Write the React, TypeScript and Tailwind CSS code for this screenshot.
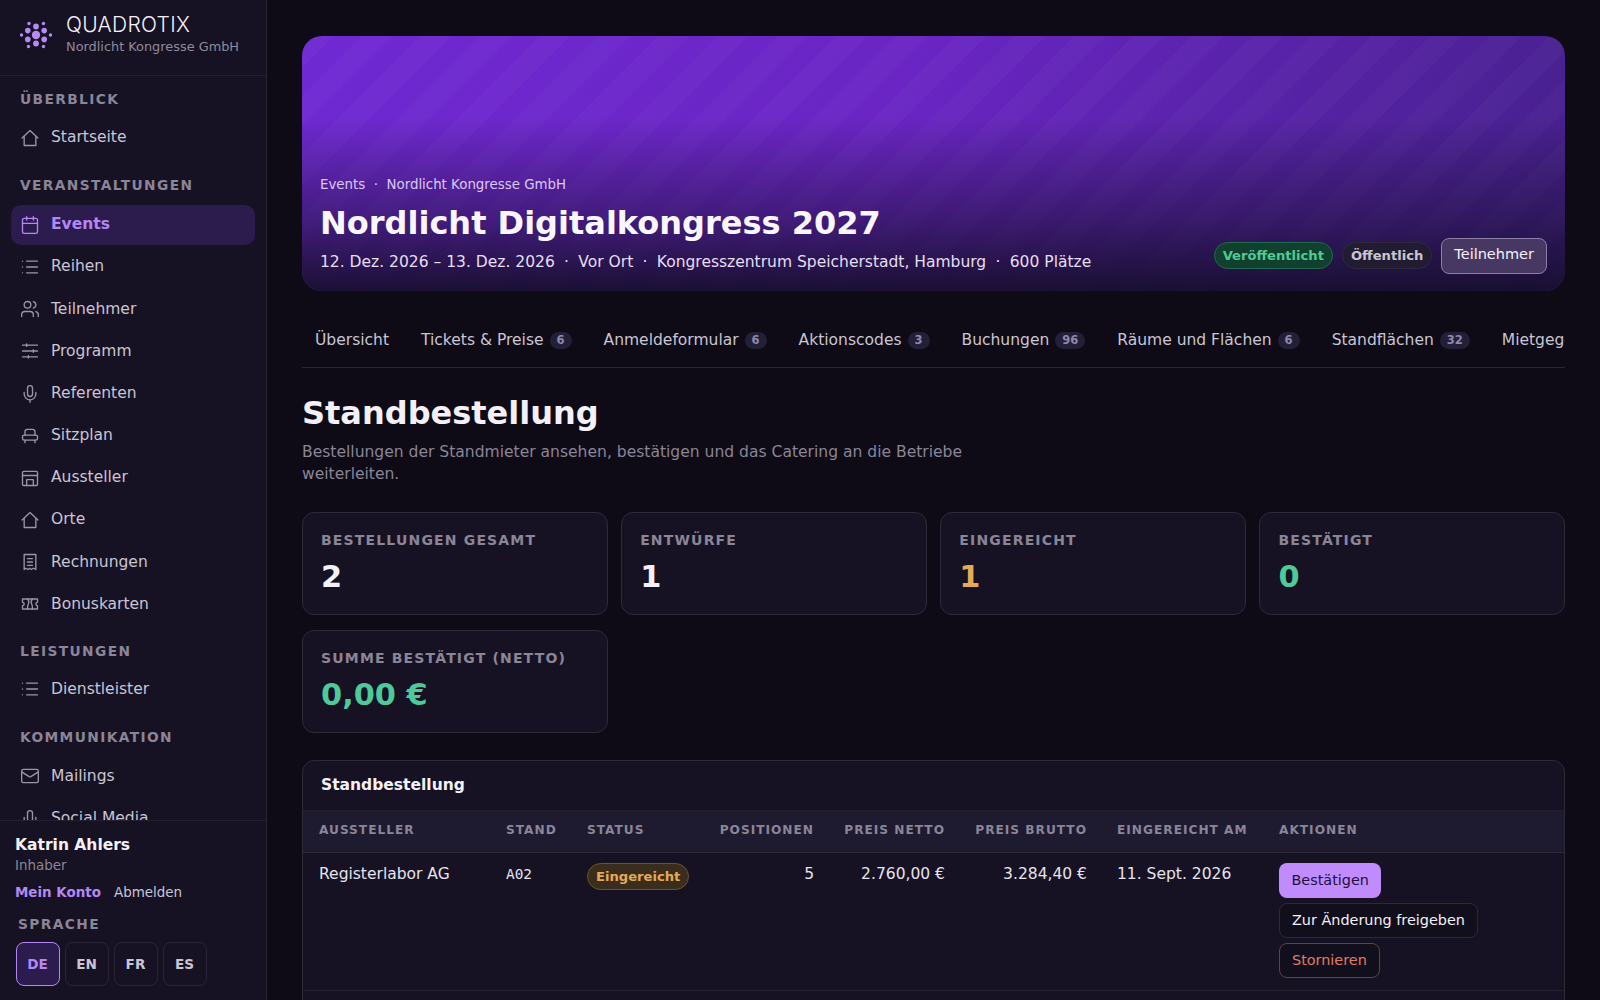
import { Calendar, List, Mail, Mic, Users } from "lucide-react";
import type { ReactNode } from "react";

function Glyph({ children }: { children: ReactNode }) {
  return (
    <svg width="20" height="20" viewBox="0 0 24 24" fill="none" stroke="currentColor" strokeWidth="1.6" strokeLinecap="round" strokeLinejoin="round">
      {children}
    </svg>
  );
}

const HomeIcon = () => (
  <Glyph>
    <path d="M2.5 12 12 3l9.5 9" />
    <path d="M5 10v11h14V10" />
  </Glyph>
);
const SlidersIcon = () => (
  <Glyph>
    <path d="M3 5h18M3 12h18M3 19h18" />
    <path d="M8 3.5v3M16 10.5v3M10 17.5v3" />
  </Glyph>
);
const SeatIcon = () => (
  <Glyph>
    <path d="M6 11V7a3 3 0 0 1 3-3h6a3 3 0 0 1 3 3v4" />
    <rect x="3" y="11" width="18" height="6" rx="2" />
    <path d="M6 17v3M18 17v3" />
  </Glyph>
);
const StoreIcon = () => (
  <Glyph>
    <rect x="3" y="4" width="18" height="17" rx="1.5" />
    <path d="M3 9h18" />
    <path d="M8 21v-7h8v7" />
  </Glyph>
);
const ReceiptIcon = () => (
  <Glyph>
    <path d="M5 3h14v18l-3-1.5-2.5 1.5-2-1.5-2 1.5L7 19.5 5 21z" />
    <path d="M9 8h6M9 12h6M9 16h6" />
  </Glyph>
);
const TicketIcon = () => (
  <Glyph>
    <path d="M3 6h18v4a2 2 0 0 0 0 4v4H3v-4a2 2 0 0 0 0-4z" />
    <path d="M9 6c2 2 2 4 1 6s-1 4-1 6M15 6c-2 2-2 4-1 6s1 4 1 6" />
  </Glyph>
);

function Logo() {
  return (
    <svg width="36" height="36" viewBox="0 0 36 36" fill="#b58af5">
      <circle cx="18" cy="18" r="4.2" />
      <circle cx="18" cy="9.5" r="2.9" />
      <circle cx="18" cy="26.5" r="2.9" />
      <circle cx="9.8" cy="13.6" r="2.8" />
      <circle cx="26.2" cy="13.6" r="2.8" />
      <circle cx="9.8" cy="22.4" r="2.8" />
      <circle cx="26.2" cy="22.4" r="2.8" />
      <circle cx="11" cy="6.5" r="1.7" />
      <circle cx="25.5" cy="6.5" r="1.7" />
      <circle cx="3.5" cy="18" r="1.7" />
      <circle cx="32.5" cy="18" r="1.7" />
      <circle cx="10.5" cy="29.5" r="1.7" />
      <circle cx="25.5" cy="29.5" r="1.7" />
    </svg>
  );
}

function NavLabel({ children }: { children: ReactNode }) {
  return <div className="px-[20px] text-[13.76px] leading-[21px] font-bold tracking-[1.4px] uppercase text-[#8a8597]">{children}</div>;
}

function NavItem({ icon, label, active }: { icon: ReactNode; label: string; active?: boolean }) {
  return (
    <a
      className={
        active
          ? "mx-[11px] mb-[2px] flex h-[40.2px] items-center gap-[11px] rounded-[10px] bg-[#2c1b4d] pr-[10px] pl-[9px] text-[15.52px] font-bold text-[#b388f5]"
          : "mx-[11px] mb-[2px] flex h-[40.2px] items-center gap-[11px] rounded-[10px] pr-[10px] pl-[9px] text-[15.52px] text-[#c9c5d3]"
      }
    >
      <span className={active ? "text-[#b388f5]" : "text-[#9a95a8]"}>{icon}</span>
      {label}
    </a>
  );
}

function Sidebar() {
  return (
    <aside className="flex h-[1000px] w-[267px] shrink-0 flex-col border-r border-[#2a2635] bg-[#161223]">
      <div className="flex h-[76px] shrink-0 items-center gap-[12px] border-b border-[#231f2e] pb-[6px] pl-[18px]">
        <Logo />
        <div>
          <div className="font-['Inter',sans-serif] text-[21px] leading-[24px] font-light tracking-[0.3px] text-[#f3f1f7]">QUADROTIX</div>
          <div className="-mt-[0.5px] text-[12.88px] leading-[19px] text-[#8f8a9c]">Nordlicht Kongresse GmbH</div>
        </div>
      </div>
      <nav className="min-h-0 flex-1 overflow-hidden pt-[13px]">
        <NavLabel>Überblick</NavLabel>
        <div className="mt-[8px]">
          <NavItem icon={<HomeIcon />} label="Startseite" />
        </div>
        <div className="mt-[17px]">
          <NavLabel>Veranstaltungen</NavLabel>
        </div>
        <div className="mt-[8.5px]">
          <NavItem icon={<Calendar size={20} strokeWidth={1.6} />} label="Events" active />
          <NavItem icon={<List size={20} strokeWidth={1.6} />} label="Reihen" />
          <NavItem icon={<Users size={20} strokeWidth={1.6} />} label="Teilnehmer" />
          <NavItem icon={<SlidersIcon />} label="Programm" />
          <NavItem icon={<Mic size={20} strokeWidth={1.6} />} label="Referenten" />
          <NavItem icon={<SeatIcon />} label="Sitzplan" />
          <NavItem icon={<StoreIcon />} label="Aussteller" />
          <NavItem icon={<HomeIcon />} label="Orte" />
          <NavItem icon={<ReceiptIcon />} label="Rechnungen" />
          <NavItem icon={<TicketIcon />} label="Bonuskarten" />
        </div>
        <div className="mt-[16.5px]">
          <NavLabel>Leistungen</NavLabel>
        </div>
        <div className="mt-[7px]">
          <NavItem icon={<List size={20} strokeWidth={1.6} />} label="Dienstleister" />
        </div>
        <div className="mt-[18px]">
          <NavLabel>Kommunikation</NavLabel>
        </div>
        <div className="mt-[8px]">
          <NavItem icon={<Mail size={20} strokeWidth={1.6} />} label="Mailings" />
          <NavItem icon={<Mic size={20} strokeWidth={1.6} />} label="Social Media" />
        </div>
      </nav>
      <div className="h-[180px] shrink-0 border-t border-[#231f2e] pt-[13px] pl-[15px]">
        <div className="text-[15.52px] leading-[22px] font-bold text-[#f3f1f7]">Katrin Ahlers</div>
        <div className="text-[13.44px] leading-[20px] text-[#8a8597]">Inhaber</div>
        <div className="mt-[7px] flex gap-[13px] text-[13.44px] leading-[20px]">
          <a className="font-bold text-[#b388f5]">Mein Konto</a>
          <a className="text-[#c9c5d3]">Abmelden</a>
        </div>
        <div className="mt-[11px] pl-[3px] text-[13.76px] leading-[21px] font-bold tracking-[1.4px] text-[#8a8597]">SPRACHE</div>
        <div className="mt-[7px] ml-[0.5px] flex gap-[5px]">
          <button className="h-[44px] w-[44px] rounded-[8px] border border-[#b388f5] bg-[#2c1b4d] text-[13.6px] font-bold text-[#b388f5]">DE</button>
          <button className="h-[44px] w-[44px] rounded-[8px] border border-[#2a2635] text-[13.6px] font-bold text-[#c9c5d3]">EN</button>
          <button className="h-[44px] w-[44px] rounded-[8px] border border-[#2a2635] text-[13.6px] font-bold text-[#c9c5d3]">FR</button>
          <button className="h-[44px] w-[44px] rounded-[8px] border border-[#2a2635] text-[13.6px] font-bold text-[#c9c5d3]">ES</button>
        </div>
      </div>
    </aside>
  );
}

function Hero() {
  return (
    <section className="relative h-[255px] overflow-hidden rounded-[20px] bg-[linear-gradient(115deg,#6f29d2_0%,#6a25c4_45%,#44208a_100%)]">
      <div className="absolute inset-0 bg-[repeating-linear-gradient(135deg,rgba(255,255,255,0.025)_0_22px,transparent_22px_42px)]" />
      <div className="absolute inset-0 bg-[linear-gradient(180deg,rgba(22,14,44,0)_32%,rgba(22,14,44,0.5)_72%,rgba(22,14,44,0.95)_100%)]" />
      <div className="relative flex h-full items-end justify-between px-[18px] pb-[17px]">
        <div>
          <div className="text-[13.36px] leading-[20px] text-[#dcc8f7]">
            Events<span className="mx-[8.5px]">·</span>Nordlicht Kongresse GmbH
          </div>
          <h1 className="mt-[7px] text-[32px] leading-[42px] font-bold text-[#f9f7fd]">Nordlicht Digitalkongress 2027</h1>
          <div className="mt-[7.5px] text-[15.52px] leading-[23px] text-[#e6def2]">
            12. Dez. 2026 – 13. Dez. 2026<span className="mx-[9.3px]">·</span>Vor Ort<span className="mx-[9.3px]">·</span>Kongresszentrum Speicherstadt, Hamburg<span className="mx-[9.3px]">·</span>600 Plätze
          </div>
        </div>
        <div className="flex items-center gap-[9px]">
          <span className="mb-[2px] rounded-full border border-[#1f6a4e] bg-[#11402f] px-[8px] py-[3px] text-[13.12px] leading-[19px] font-bold text-[#4fcb94]">Veröffentlicht</span>
          <span className="mb-[2px] rounded-full border border-[#2e2a3c] bg-[#221c33] px-[8px] py-[3px] text-[13.12px] leading-[19px] font-bold text-[#c9c5d3]">Öffentlich</span>
          <button className="h-[36px] rounded-[8px] border border-[#8d7ea8] bg-[#463862] px-[12px] pb-[2px] text-[14.5px] text-[#f3f1f7]">Teilnehmer</button>
        </div>
      </div>
    </section>
  );
}

function Tab({ label, count }: { label: string; count?: string }) {
  return (
    <a className="flex shrink-0 items-center gap-[6px] whitespace-nowrap text-[15.52px] text-[#c9c5d3]">
      {label}
      {count && <span className="rounded-full bg-[#231f36] px-[7px] text-[11.5px] leading-[17px] font-bold text-[#8f88ac]">{count}</span>}
    </a>
  );
}

function StatCard({ label, value, valueClass }: { label: string; value: string; valueClass: string }) {
  return (
    <div className="h-[103.5px] rounded-[12px] border border-[#2e2a3a] bg-[#161223] px-[18px] pt-[17px]">
      <div className="text-[14px] leading-[21px] font-bold tracking-[1.17px] uppercase text-[#8a8597]">{label}</div>
      <div className={"mt-[6px] text-[30.4px] leading-[40px] font-bold " + valueClass}>{value}</div>
    </div>
  );
}

function Th({ children, right }: { children: ReactNode; right?: boolean }) {
  return (
    <th className={(right ? "text-right " : "text-left ") + "px-[15px] pb-[2px] first:pl-[16px] text-[12.16px] font-bold tracking-[1px] whitespace-nowrap uppercase text-[#8a8597]"}>{children}</th>
  );
}

export default function App() {
  return (
    <div className="flex h-[1000px] overflow-hidden bg-[#0e0b16] font-['DejaVu_Sans',sans-serif]">
      <Sidebar />
      <main className="min-w-0 flex-1 overflow-hidden px-[35px] pt-[36px]">
        <Hero />
        <div className="mt-[20px] flex h-[57px] items-center gap-[32px] overflow-hidden border-b border-[#2a2635] pt-[4px] pl-[13px]">
          <Tab label="Übersicht" />
          <Tab label="Tickets & Preise" count="6" />
          <Tab label="Anmeldeformular" count="6" />
          <Tab label="Aktionscodes" count="3" />
          <Tab label="Buchungen" count="96" />
          <Tab label="Räume und Flächen" count="6" />
          <Tab label="Standflächen" count="32" />
          <Tab label="Mietgegenstände" />
        </div>
        <h2 className="mt-[23px] text-[32px] leading-[44px] font-bold text-[#f3f1f7]">Standbestellung</h2>
        <p className="mt-[6px] max-w-[680px] text-[15.56px] leading-[22.4px] text-[#8a8597]">
          Bestellungen der Standmieter ansehen, bestätigen und das Catering an die Betriebe weiterleiten.
        </p>
        <div className="mt-[26px] grid grid-cols-4 gap-x-[13.6px] gap-y-[14.4px]">
          <StatCard label="Bestellungen gesamt" value="2" valueClass="text-[#f3f1f7]" />
          <StatCard label="Entwürfe" value="1" valueClass="text-[#f3f1f7]" />
          <StatCard label="Eingereicht" value="1" valueClass="text-[#e5a957]" />
          <StatCard label="Bestätigt" value="0" valueClass="text-[#4fc99a]" />
          <StatCard label="Summe bestätigt (netto)" value="0,00 €" valueClass="text-[#4fc99a]" />
        </div>
        <section className="mt-[27px] overflow-hidden rounded-[12px] border border-[#2e2a3a] bg-[#161223]">
          <div className="flex h-[50px] items-center border-b border-[#231f2e] px-[18px] pb-[1px] text-[15.52px] font-bold text-[#f3f1f7]">Standbestellung</div>
          <table className="w-full table-fixed border-collapse">
            <colgroup>
              <col className="w-[188px]" />
              <col className="w-[81px]" />
              <col className="w-[130px]" />
              <col className="w-[127px]" />
              <col className="w-[131px]" />
              <col className="w-[142px]" />
              <col className="w-[162px]" />
              <col />
            </colgroup>
            <thead>
              <tr className="h-[41px] border-b border-[#2e2a3a] bg-[#1e1a30]">
                <Th>Aussteller</Th>
                <Th>Stand</Th>
                <Th>Status</Th>
                <Th right>Positionen</Th>
                <Th right>Preis netto</Th>
                <Th right>Preis brutto</Th>
                <Th>Eingereicht am</Th>
                <Th>Aktionen</Th>
              </tr>
            </thead>
            <tbody>
              <tr className="h-[138px] border-b border-[#231f2e] align-top text-[15.52px] leading-[22px] text-[#e6e3ec]">
                <td className="px-[15px] pt-[10px] pl-[16px]">Registerlabor AG</td>
                <td className="px-[15px] pt-[10px] font-['DejaVu_Sans_Mono',monospace] text-[14.4px]">A02</td>
                <td className="px-[15px] pt-[10px]">
                  <span className="inline-block rounded-full border border-[#6a5330] bg-[#3a2d1b] px-[8px] py-[3px] text-[13.12px] leading-[19px] font-bold text-[#e5a957]">Eingereicht</span>
                </td>
                <td className="px-[15px] pt-[10px] text-right">5</td>
                <td className="px-[15px] pt-[10px] text-right">2.760,00 €</td>
                <td className="px-[15px] pt-[10px] text-right">3.284,40 €</td>
                <td className="px-[15px] pt-[10px]">11. Sept. 2026</td>
                <td className="px-[15px] pt-[10px]">
                  <div className="flex flex-col items-start gap-[4.8px]">
                    <button className="h-[35.2px] rounded-[8px] bg-[#c08cfd] px-[12.5px] text-[14.4px] text-[#1e0f3c]">Bestätigen</button>
                    <button className="h-[35.2px] rounded-[8px] border border-[#2e2a3a] bg-[#120f1c] px-[12px] text-[14.4px] text-[#f3f1f7]">Zur Änderung freigeben</button>
                    <button className="h-[35.2px] rounded-[8px] border border-[#6a3f3c] bg-[#120f1c] px-[12px] text-[14.4px] text-[#e07c66]">Stornieren</button>
                  </div>
                </td>
              </tr>
              <tr className="h-[80px]">
                <td colSpan={8} />
              </tr>
            </tbody>
          </table>
        </section>
      </main>
    </div>
  );
}
